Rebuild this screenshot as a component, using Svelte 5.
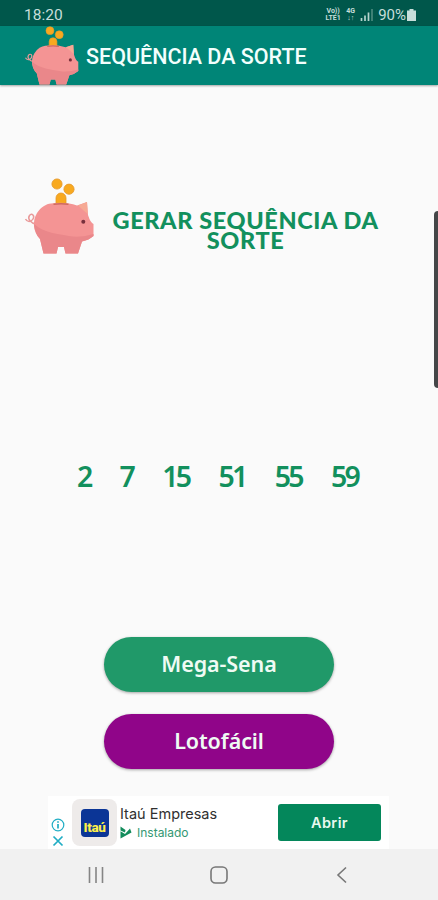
<script>
  const numbers = [2, 7, 15, 51, 55, 59];

  const games = [
    { id: "mega", name: "Mega-Sena" },
    { id: "loto", name: "Lotofácil" }
  ];
</script>

<!-- Piggy bank, used in the app bar and next to the heading -->
{#snippet pig()}
  <svg class="pig" viewBox="0 0 70 76" aria-hidden="true">
    <path d="M12 46C7 45 3 41 5.5 37.5C8 34.5 11 38 9 41C7 44.5 3 44 1.5 41" fill="none" stroke="#e99a9a" stroke-width="1.5" />
    <g fill="#f8a91f" stroke="#e5982c" stroke-width="0.8">
      <circle cx="33" cy="6" r="5.1" />
      <circle cx="45" cy="11.2" r="5.1" />
      <path d="M32 27V20a5 5 0 0 1 10 0V27Z" />
    </g>
    <path d="M27 25.5C36 24 45 24.5 53 27.5L63 24L64 37Q66.5 45 69.5 46V58Q65 62 58 63.5L54 75.5H41.5L40 69H34L32.5 75.5H19.5L16 61C9 54 8 43 13 35C17 29 22 26 27 25.5Z" fill="#f49494" />
    <path d="M10 46C20 55 35 56 45 58Q57 60 69.5 56V58Q65 62 58 63.5L54 75.5H41.5L40 69H34L32.5 75.5H19.5L16 61Q11 56 10 46Z" fill="#ea878a" />
    <path d="M54 27.5L63 24L63.6 36Z" fill="#f6a994" />
    <path d="M29.5 26.3Q37 25.2 44.5 26.3" fill="none" stroke="#cf6a5c" stroke-width="1.6" />
    <circle cx="59.3" cy="43.7" r="2" fill="#77303c" />
  </svg>
{/snippet}

<div class="screen">
  <div class="status-bar">
    <span class="clock">18:20</span>
    <div class="status-icons">
      <div class="network"><span>Vo))</span><span>LTE1</span></div>
      <div class="network net-4g"><span>4G</span><span>↓↑</span></div>
      <svg class="signal" width="13" height="12" viewBox="0 0 13 12">
        <path d="M1.5 12V9M5 12V6.5M8.5 12V3.5" stroke="#b6d3cd" stroke-width="1.7" />
        <path d="M12 12V0" stroke="#4d8c80" stroke-width="1.6" />
      </svg>
      <span class="battery-level">90%</span>
      <svg class="battery" width="9" height="12" viewBox="0 0 9 12">
        <path d="M2.5 0H6.5V1.5H9V12H0V1.5H2.5Z" fill="#c7deda" />
      </svg>
    </div>
  </div>

  <header class="app-bar">
    {@render pig()}
    <h1>SEQUÊNCIA DA SORTE</h1>
  </header>

  <main>
    <div class="intro">
      {@render pig()}
      <h2><span>GERAR SEQUÊNCIA DA</span><span>SORTE</span></h2>
    </div>

    <div class="numbers">
      {#each numbers as number}
        <span>{number}</span>
      {/each}
    </div>

    <div class="games">
      {#each games as game}
        <button class="game {game.id}">{game.name}</button>
      {/each}
    </div>

    <!-- Ad banner -->
    <div class="ad">
      <div class="ad-marks">
        <svg width="14" height="14" viewBox="0 0 14 14" fill="none" stroke="#20adc4">
          <circle cx="7" cy="7" r="5.8" stroke-width="1.2" />
          <path d="M7 6V10.5M7 3.3V4.8" stroke-width="1.7" />
        </svg>
        <svg width="14" height="12" viewBox="0 0 14 12">
          <path d="M2.5 1.5L11.5 10.5M11.5 1.5L2.5 10.5" stroke="#20adc4" stroke-width="1.7" />
        </svg>
      </div>
      <div class="ad-icon"><span>Itaú</span></div>
      <div class="ad-text">
        <span class="ad-name">Itaú Empresas</span>
        <span class="ad-status">
          <svg width="12" height="13" viewBox="0 0 12 13">
            <path d="M0.5 0.5L5.5 4L5 6.5L0.5 4.5ZM0.5 5.2L5 8L10 2.5L11.5 6.5L0.5 12.5Z" fill="#138c5c" />
          </svg>
          Instalado
        </span>
      </div>
      <button class="open">Abrir</button>
    </div>
  </main>

  <nav class="nav-bar">
    <svg width="18" height="18" viewBox="0 0 18 18">
      <path d="M2.5 1V17M9 1V17M15.5 1V17" stroke="#858585" stroke-width="1.6" />
    </svg>
    <svg width="18" height="18" viewBox="0 0 18 18">
      <rect x="1" y="1" width="16" height="16" rx="4.5" fill="none" stroke="#777" stroke-width="1.6" />
    </svg>
    <svg width="18" height="18" viewBox="0 0 18 18">
      <path d="M13 1.5L5 9L13 16.5" fill="none" stroke="#777" stroke-width="1.6" />
    </svg>
  </nav>

  <div class="edge-handle"></div>
</div>

<style>
  :global(body) {
    margin: 0;
  }

  .screen {
    position: relative;
    display: flex;
    flex-direction: column;
    width: 438px;
    height: 900px;
    overflow: hidden;
    background: #fafafa;
    font-family: Roboto, "Liberation Sans", sans-serif;
  }

  .pig {
    display: block;
    flex: none;
  }

  /* Status bar */
  .status-bar {
    display: flex;
    flex: none;
    align-items: center;
    justify-content: space-between;
    box-sizing: border-box;
    height: 26px;
    padding: 3px 22px 0 24px;
    background: #00574b;
    color: #c7deda;
    font-size: 15.5px;
  }

  .status-icons {
    display: flex;
    align-items: center;
  }

  .network {
    display: flex;
    flex-direction: column;
    align-items: center;
    width: 16px;
    margin-right: 5px;
    font-size: 7px;
    font-weight: 700;
    line-height: 6.5px;
  }

  .net-4g {
    width: 9px;
    margin-right: 5px;
  }

  .battery-level {
    margin: 0 1px 0 5px;
    font-size: 15px;
  }

  /* App bar */
  .app-bar {
    display: flex;
    flex: none;
    align-items: center;
    height: 59px;
    padding-left: 24px;
    background: #008577;
    box-shadow: 0 1px 2px rgba(0, 0, 0, 0.35);
  }

  .app-bar .pig {
    width: 55px;
    height: 59px;
  }

  .app-bar h1 {
    margin: 2px 0 0 7px;
    color: #f2fffd;
    font-size: 21.5px;
    font-weight: 500;
    white-space: nowrap;
  }

  main {
    display: flex;
    flex: 1;
    flex-direction: column;
  }

  .intro {
    display: flex;
    height: 76px;
    margin-top: 93px;
    padding-left: 24px;
  }

  .intro .pig {
    width: 70px;
    height: 76px;
  }

  .intro h2 {
    display: flex;
    flex-direction: column;
    align-items: center;
    width: 267px;
    margin: 32px 0 0 18px;
    color: #12905d;
    font-family: Lato, sans-serif;
    font-size: 23.5px;
    font-weight: 900;
    line-height: 20px;
    letter-spacing: 0.6px;
    white-space: nowrap;
  }

  .numbers {
    display: flex;
    gap: 29px;
    height: 34px;
    margin: 205px 0 0 77px;
    color: #12905d;
    font-family: "Noto Sans", sans-serif;
    font-size: 28.5px;
    font-weight: 600;
    line-height: 34px;
    letter-spacing: -2.7px;
  }

  /* Game buttons */
  .games {
    display: flex;
    flex-direction: column;
    align-items: center;
    gap: 22px;
    margin-top: 144px;
  }

  .game {
    width: 230px;
    height: 55px;
    padding: 0 0 2px;
    border: none;
    border-radius: 28px;
    color: #effbf4;
    font-family: "Noto Sans", sans-serif;
    font-size: 21.5px;
    font-weight: 600;
    letter-spacing: -0.1px;
    box-shadow: 0 1px 3px rgba(0, 0, 0, 0.35);
  }

  .mega {
    background: #209969;
  }

  .loto {
    background: #900589;
  }

  .ad {
    display: flex;
    align-items: center;
    box-sizing: border-box;
    width: 341px;
    height: 53px;
    margin: auto 0 0 48px;
    background: #fff;
  }

  .ad-marks {
    display: flex;
    flex-direction: column;
    gap: 3px;
    margin: 19px 7px 0 3px;
  }

  .ad-icon {
    display: flex;
    align-items: center;
    justify-content: center;
    width: 45px;
    height: 47px;
    border-radius: 8px;
    background: #eeebea;
  }

  .ad-icon span {
    display: flex;
    align-items: flex-end;
    justify-content: center;
    box-sizing: border-box;
    width: 28px;
    height: 28px;
    padding-bottom: 2px;
    border-radius: 4px;
    background: #0b3596;
    color: #fff04a;
    font-size: 13.5px;
    font-weight: 800;
    line-height: 15px;
    letter-spacing: -0.4px;
  }

  .ad-text {
    display: flex;
    flex-direction: column;
    width: 158px;
    margin-left: 3px;
    font-family: Inter, sans-serif;
  }

  .ad-name {
    color: #303030;
    font-size: 14.5px;
    line-height: 19px;
  }

  .ad-status {
    display: flex;
    align-items: center;
    gap: 5px;
    color: #349873;
    font-size: 12px;
    line-height: 19px;
  }

  .open {
    width: 103px;
    height: 37px;
    padding: 0;
    border: none;
    border-radius: 3px;
    background: #04875b;
    color: #e8f8ef;
    font-family: Inter, sans-serif;
    font-size: 14.5px;
    font-weight: 600;
    letter-spacing: 0.4px;
  }

  .nav-bar {
    display: flex;
    flex: none;
    align-items: center;
    justify-content: center;
    gap: 105px;
    height: 51px;
    background: #f1f1f1;
  }

  /* Edge panel handle floats over the content */
  .edge-handle {
    position: absolute;
    top: 211px;
    right: 0;
    width: 4px;
    height: 177px;
    border-radius: 4px 0 0 4px;
    background: #444648;
  }
</style>
